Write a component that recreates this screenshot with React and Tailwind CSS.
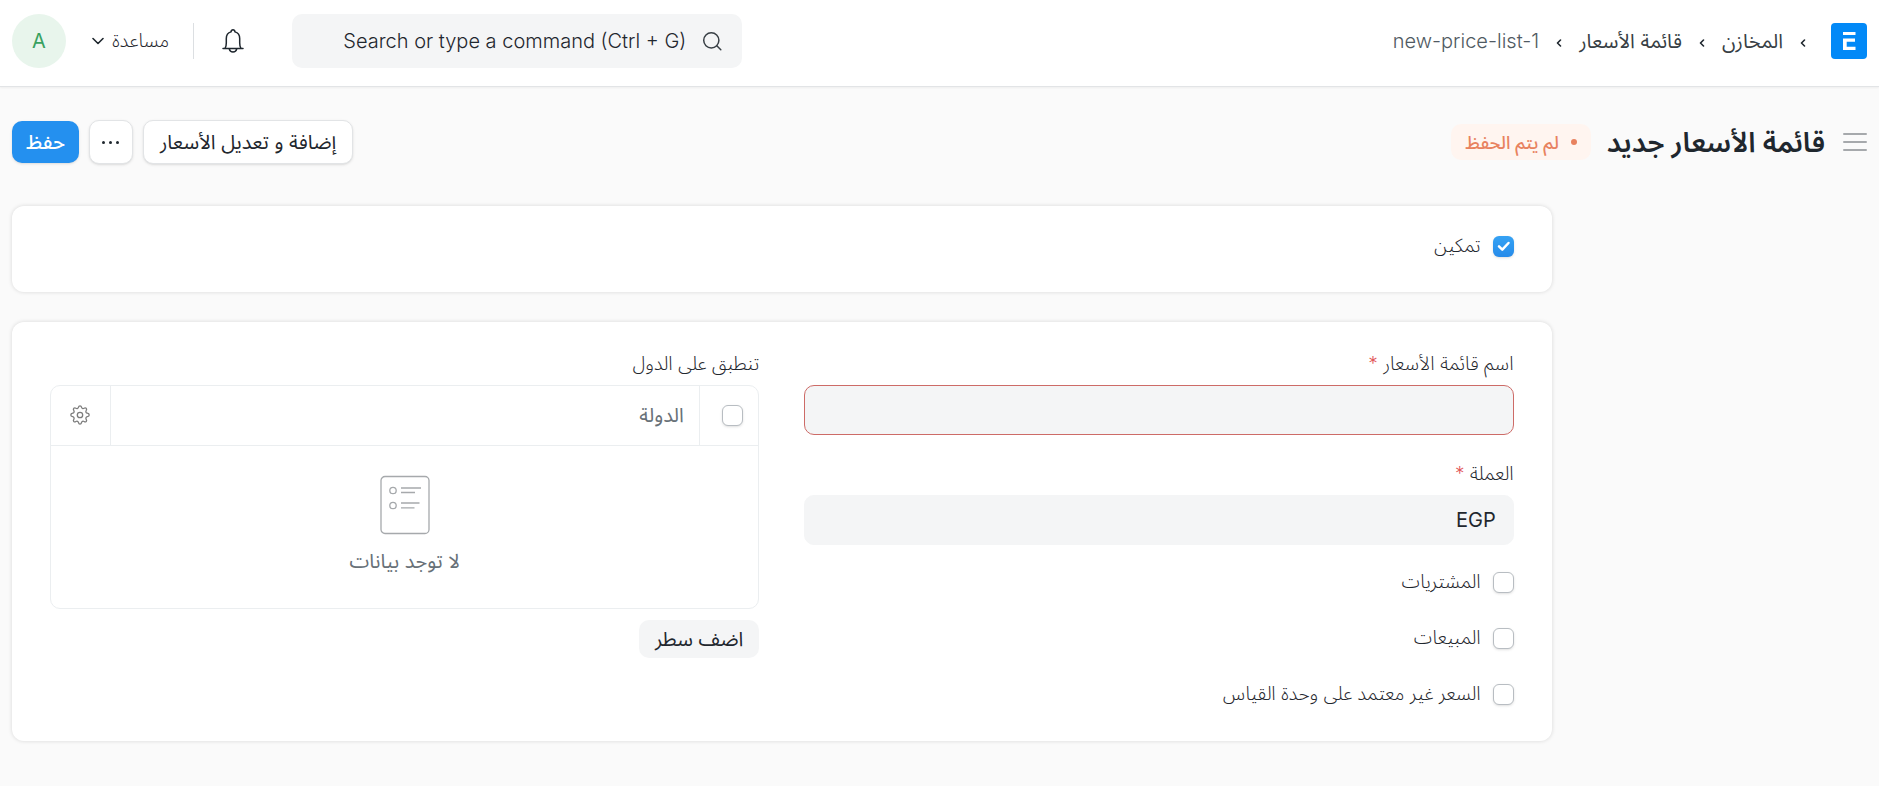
import React, { useState } from "react";

const breadcrumbs = [
  { label: "المخازن", href: "#stock" },
  { label: "قائمة الأسعار", href: "#price-list" },
];

const Logo = () => (
  <svg viewBox="0 0 36 36" className="w-9 h-9">
    <rect width="36" height="36" rx="4" fill="#0289f7" />
    <path d="M12 9h12.500v3H12z" fill="#fff" />
    <path d="M12 15.500h12v3.200h-8.300v5h8.800V27H12z" fill="#fff" />
  </svg>
);

const BellIcon = () => (
  <svg viewBox="0 0 22 26" className="w-[22px] h-[26px]" fill="none" stroke="#1f272e" strokeWidth="1.500">
    <path
      d="M1 20.500h20M3 20.500c1-1.500 1.300-3.500 1.300-5.500v-4.500c0-3.300 2-5.800 4.700-6.600C9.200 2.500 9.900 1.700 11 1.700s1.800.8 2 2.200c2.700.8 4.700 3.300 4.700 6.600V15c0 2 .3 4 1.300 5.500"
      strokeLinecap="round"
      strokeLinejoin="round"
    />
    <path d="M7.300 20.800c.4 1.900 1.900 3.200 3.700 3.200s3.300-1.300 3.700-3.200" />
  </svg>
);

const SearchIcon = () => (
  <svg viewBox="0 0 20 20" className="w-5 h-5 shrink-0" fill="none" stroke="#383f45" strokeWidth="1.500">
    <circle cx="9.300" cy="9.300" r="7.600" />
    <path d="M14.800 14.800l4 4" strokeLinecap="round" />
  </svg>
);

const ChevronIcon = () => (
  <svg viewBox="0 0 12 8" className="w-3 h-2" fill="none" stroke="#1f272e" strokeWidth="1.600">
    <path d="M1 1.500l5 5 5-5" strokeLinecap="round" strokeLinejoin="round" />
  </svg>
);

const BreadcrumbArrow = () => (
  <span className="flex justify-center w-10 pt-1">
    <svg viewBox="0 0 6 8" className="w-1.5 h-2" fill="none" stroke="#1f272e" strokeWidth="1.600">
      <path d="M4.500 1L1.500 4l3 3" strokeLinecap="round" strokeLinejoin="round" />
    </svg>
  </span>
);

const GearIcon = () => (
  <svg viewBox="0 0 20 20" className="w-5 h-5" fill="none" stroke="#7c7c7c" strokeWidth="1.300">
    <path
      d="M8.500 2.200C8.700 1.200 9.200.8 10 .8s1.300.4 1.500 1.400c.2 1.300 1.500 1.800 2.600 1.100.9-.6 1.500-.5 2.100 0 .6.600.6 1.300 0 2.200-.7 1.100-.2 2.400 1.100 2.600 1.400.2 1.900.9 1.900 1.900s-.5 1.500-1.900 1.700c-1.300.2-1.800 1.500-1.100 2.600.6.9.6 1.600 0 2.200-.6.500-1.300.600-2.100 0-1.100-.7-2.400-.2-2.600 1.100-.2 1-.7 1.600-1.500 1.600s-1.300-.6-1.500-1.600c-.2-1.300-1.500-1.800-2.600-1.100-.9.6-1.500.5-2.100 0-.6-.6-.6-1.300 0-2.200.7-1.100.2-2.400-1.100-2.600C1.300 11.500.8 11 .8 10s.5-1.700 1.900-1.900C4 7.900 4.500 6.600 3.800 5.500c-.6-.9-.6-1.600 0-2.200.6-.5 1.200-.6 2.100 0 1.100.7 2.400.2 2.600-1.100z"
      strokeLinejoin="round"
    />
    <circle cx="10" cy="10" r="2.700" />
  </svg>
);

const EmptyListIcon = () => (
  <svg viewBox="0 0 50 60" className="w-[50px] h-[60px]" fill="none" stroke="#a6a9ac" strokeWidth="1.300">
    <rect x="1" y="1.500" width="48" height="57" rx="4" />
    <circle cx="13" cy="15.500" r="3.200" />
    <circle cx="13" cy="30.500" r="3.200" />
    <path d="M21 13h20M21 17.500h14M21 28h18.500M21 32.800h13.500" />
  </svg>
);

const Check = ({ id, checked, onChange, label }) => (
  <span className="relative flex w-[21px] h-[21px] shrink-0">
    <input
      id={id}
      type="checkbox"
      aria-label={label}
      checked={checked}
      onChange={onChange}
      className="peer appearance-none w-full h-full rounded-md border border-[#b8bdc2] bg-white shadow-sm checked:border-0 checked:bg-linear-to-b checked:from-[#35a2f4] checked:to-[#268bea]"
    />
    <svg
      viewBox="0 0 21 21"
      className="absolute inset-0 hidden peer-checked:block pointer-events-none"
      fill="none"
      stroke="#fff"
      strokeWidth="2.500"
    >
      <path d="M6 10.300l3.300 3.300L15.500 7" strokeLinecap="round" strokeLinejoin="round" />
    </svg>
  </span>
);

const CheckField = ({ id, label, defaultChecked = false }) => {
  const [checked, setChecked] = useState(defaultChecked);

  return (
    <div className="flex items-center gap-3 h-[21px]">
      <Check id={id} checked={checked} onChange={() => setChecked(!checked)} />
      <label htmlFor={id} className="text-[19px] font-light text-[#1f272e]">
        {label}
      </label>
    </div>
  );
};

const TextField = ({ id, label, value, onChange, error }) => (
  <div>
    <label htmlFor={id} className="block h-7 mb-[7px] text-[19px] font-light leading-7 text-[#1f272e]">
      {label} <span className="text-[#e2585a]">*</span>
    </label>
    <input
      id={id}
      type="text"
      value={value}
      onChange={(e) => onChange(e.target.value)}
      className={`block w-full h-[50px] px-[17px] rounded-[10px] bg-[#f4f5f6] text-[20px] text-[#1f272e] outline-none border ${
        error ? "border-[#cd6b67]" : "border-[#f4f5f6]"
      }`}
    />
  </div>
);

const Navbar = () => (
  <header className="flex items-center justify-between h-[87px] px-3 pb-1 bg-white border-b border-[#e2e4e6] shadow-xs">
    <nav className="flex items-center text-[20px] text-[#383f45]">
      <a href="#home" aria-label="الرئيسية" className="me-2">
        <Logo />
      </a>
      {breadcrumbs.map((item) => (
        <React.Fragment key={item.label}>
          <BreadcrumbArrow />
          <a href={item.href}>{item.label}</a>
        </React.Fragment>
      ))}
      <BreadcrumbArrow />
      <a href="#new" dir="ltr" className="font-light text-[#505a62]">
        new-price-list-1
      </a>
    </nav>

    <div className="flex items-center">
      <div className="flex items-center gap-4 w-[450px] h-[54px] px-5 rounded-[10px] bg-[#f4f5f6]">
        <SearchIcon />
        <input
          type="text"
          dir="ltr"
          aria-label="Search"
          placeholder="Search or type a command (Ctrl + G)"
          className="min-w-0 flex-1 bg-transparent text-right text-[20px] font-light text-[#383f45] placeholder:text-[#1f272e] outline-none"
        />
      </div>
      <button aria-label="الإشعارات" className="ms-12">
        <BellIcon />
      </button>
      <div className="w-px h-9 ms-7 me-6 bg-[#dcdfe2]" />
      <button className="flex items-center gap-2 text-[19px] font-light text-[#1f272e]">
        مساعدة
        <ChevronIcon />
      </button>
      <button className="ms-[26px] w-[54px] h-[54px] rounded-full bg-[#e8f5ec] text-[20px] text-[#38a160]">
        A
      </button>
    </div>
  </header>
);

const PageHead = () => (
  <div className="flex items-center justify-between h-[110px] px-3">
    <div className="flex items-center">
      <button aria-label="القائمة الجانبية" className="flex flex-col gap-1.5 w-6">
        <span className="h-0.5 rounded bg-[#a6a9ac]" />
        <span className="h-0.5 rounded bg-[#a6a9ac]" />
        <span className="h-0.5 rounded bg-[#a6a9ac]" />
      </button>
      <h1 className="ms-[18px] text-[28px] font-semibold text-[#1f272e]">قائمة الأسعار جديد</h1>
      <span className="flex items-center gap-3 h-9 ms-4 px-3.5 rounded-[10px] bg-[#fff5f0] text-[18px] font-medium text-[#e8825f]">
        <span className="w-1.5 h-1.5 rounded-full bg-[#e8825f]" />
        لم يتم الحفظ
      </span>
    </div>

    <div className="flex items-center gap-2.5 text-[20px] text-[#1f272e]">
      <button className="h-11 px-4 rounded-[10px] bg-white border border-[#e2e4e6] shadow-sm">
        إضافة و تعديل الأسعار
      </button>
      <button
        aria-label="المزيد"
        className="flex items-center justify-center gap-1 w-11 h-11 rounded-[10px] bg-white border border-[#e2e4e6] shadow-sm"
      >
        <span className="w-[3px] h-[3px] rounded-full bg-[#1f272e]" />
        <span className="w-[3px] h-[3px] rounded-full bg-[#1f272e]" />
        <span className="w-[3px] h-[3px] rounded-full bg-[#1f272e]" />
      </button>
      <button className="h-[42px] px-3.5 rounded-[10px] bg-[#2490ef] text-white font-medium shadow-sm">
        حفظ
      </button>
    </div>
  </div>
);

const CountriesTable = () => {
  const [all, setAll] = useState(false);

  return (
    <div>
      <p className="h-7 mb-[7px] text-[19px] font-light leading-7 text-[#1f272e]">تنطبق على الدول</p>
      <div className="rounded-[10px] border border-[#ebeef0] overflow-hidden">
        <table className="w-full text-[20px] text-[#687178]">
          <thead>
            <tr className="h-[59px] border-b border-[#ebeef0]">
              <th className="w-[59px] border-e border-[#ebeef0] ps-[15px]">
                <Check label="تحديد الكل" checked={all} onChange={() => setAll(!all)} />
              </th>
              <th className="px-[15px] text-start font-normal">الدولة</th>
              <th className="w-[59px] border-s border-[#ebeef0]">
                <button aria-label="إعدادات الأعمدة" className="block mx-auto">
                  <GearIcon />
                </button>
              </th>
            </tr>
          </thead>
          <tbody>
            <tr>
              <td colSpan={3} className="h-[163px] pb-1">
                <div className="flex flex-col items-center gap-3">
                  <EmptyListIcon />
                  <span className="leading-7">لا توجد بيانات</span>
                </div>
              </td>
            </tr>
          </tbody>
        </table>
      </div>
      <button className="h-[38px] mt-[11px] px-4 rounded-[10px] bg-[#f4f5f6] text-[20px] text-[#1f272e]">
        اضف سطر
      </button>
    </div>
  );
};

const App = () => {
  const [name, setName] = useState("");
  const [currency, setCurrency] = useState("EGP");

  return (
    <div
      dir="rtl"
      className="min-h-screen bg-[#fafafa] font-[Inter,'Noto_Sans_Arabic','Noto_Sans','DejaVu_Sans',sans-serif]"
    >
      <Navbar />
      <PageHead />

      <main className="flex px-3 pt-[9px]">
        {/* Empty side section */}
        <aside className="w-[17%] shrink-0" />

        <form className="flex-1 flex flex-col gap-[30px]">
          <section className="px-[38px] pt-[30px] pb-[35px] rounded-xl bg-white shadow-[0_0_4px_rgba(0,0,0,0.14)]">
            <CheckField id="enabled" label="تمكين" defaultChecked />
          </section>

          <section className="grid grid-cols-2 gap-[45px] px-[38px] pt-7 pb-9 rounded-xl bg-white shadow-[0_0_4px_rgba(0,0,0,0.14)]">
            <div>
              <div className="flex flex-col gap-[25px]">
                <TextField id="name" label="اسم قائمة الأسعار" value={name} onChange={setName} error={!name} />
                <TextField id="currency" label="العملة" value={currency} onChange={setCurrency} />
              </div>
              <div className="flex flex-col gap-[35px] mt-[27px]">
                <CheckField id="buying" label="المشتريات" />
                <CheckField id="selling" label="المبيعات" />
                <CheckField id="uom" label="السعر غير معتمد على وحدة القياس" />
              </div>
            </div>
            <CountriesTable />
          </section>
        </form>
      </main>
    </div>
  );
};

export default App;
